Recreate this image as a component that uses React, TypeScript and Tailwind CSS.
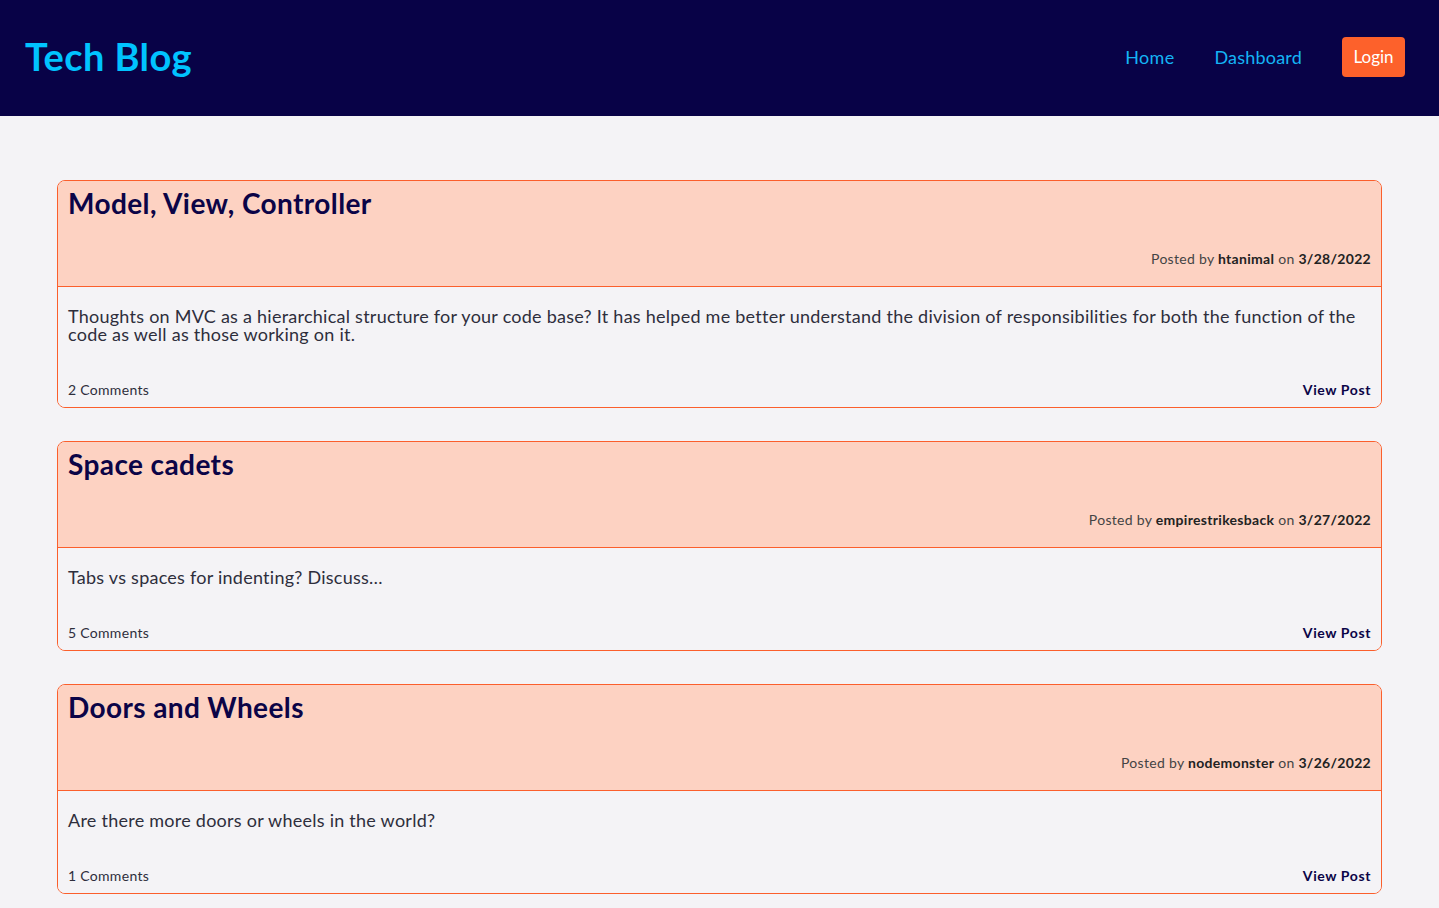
import React from "react";

interface Post {
  title: string;
  author: string;
  date: string;
  body: string;
  comments: number;
}

const posts: Post[] = [
  {
    title: "Model, View, Controller",
    author: "htanimal",
    date: "3/28/2022",
    body: "Thoughts on MVC as a hierarchical structure for your code base? It has helped me better understand the division of responsibilities for both the function of the code as well as those working on it.",
    comments: 2,
  },
  {
    title: "Space cadets",
    author: "empirestrikesback",
    date: "3/27/2022",
    body: "Tabs vs spaces for indenting? Discuss…",
    comments: 5,
  },
  {
    title: "Doors and Wheels",
    author: "nodemonster",
    date: "3/26/2022",
    body: "Are there more doors or wheels in the world?",
    comments: 1,
  },
];

const PostCard = ({ post }: { post: Post }) => (
  <article className="rounded-lg border border-[#fb5f2c] overflow-hidden">
    {/* Header */}
    <div className="bg-[#fdd2c2] border-b border-[#fb5f2c] px-[10px] pt-[5px] pb-[17px]">
      <h2 className="text-[28px] leading-[34px] font-bold tracking-[0.4px] text-[#0b0447]">{post.title}</h2>
      <p className="mt-[29px] text-right text-[14px] leading-[20px] tracking-[0.3px] text-[#444]">
        Posted by <span className="font-bold text-[#222]">{post.author}</span> on{" "}
        <span className="font-bold text-[#222]">{post.date}</span>
      </p>
    </div>

    {/* Body */}
    <div className="bg-[#f4f3f6] px-[10px] pt-[20px] pb-[7px]">
      <p className="text-[18px] leading-[18px] tracking-[0.25px] text-[#2e2e3c]">{post.body}</p>
      <div className="mt-[37px] flex items-center justify-between text-[14px] leading-[20px]">
        <span className="text-[#2e2e3c] tracking-[0.3px]">{post.comments} Comments</span>
        <a href="#" className="font-bold text-[#0b0447] tracking-[0.6px]">View Post</a>
      </div>
    </div>
  </article>
);

export default function App() {
  return (
    <div className="min-h-screen bg-[#f4f3f6] font-['Lato',sans-serif]">
      {/* Nav bar */}
      <header className="h-[116px] bg-[#080247] flex items-center justify-between pl-[25px] pr-[34px]">
        <h1 className="mb-[4px] text-[38px] font-bold tracking-[0.4px] text-[#00c3ff] leading-none">Tech Blog</h1>
        <nav className="-mt-[2px] flex items-center">
          <a href="#" className="text-[18px] tracking-[0.3px] text-[#14b4f5]">Home</a>
          <a href="#" className="ml-[40px] text-[18px] tracking-[0.2px] text-[#14b4f5]">Dashboard</a>
          <button className="ml-[40px] h-[40px] w-[63px] rounded-[4px] bg-[#fd612b] text-[17px] text-white">
            Login
          </button>
        </nav>
      </header>

      {/* Posts */}
      <main className="px-[57px] pt-[64px] pb-[15px] flex flex-col gap-[33px]">
        {posts.map((post) => (
          <PostCard key={post.title} post={post} />
        ))}
      </main>
    </div>
  );
}
